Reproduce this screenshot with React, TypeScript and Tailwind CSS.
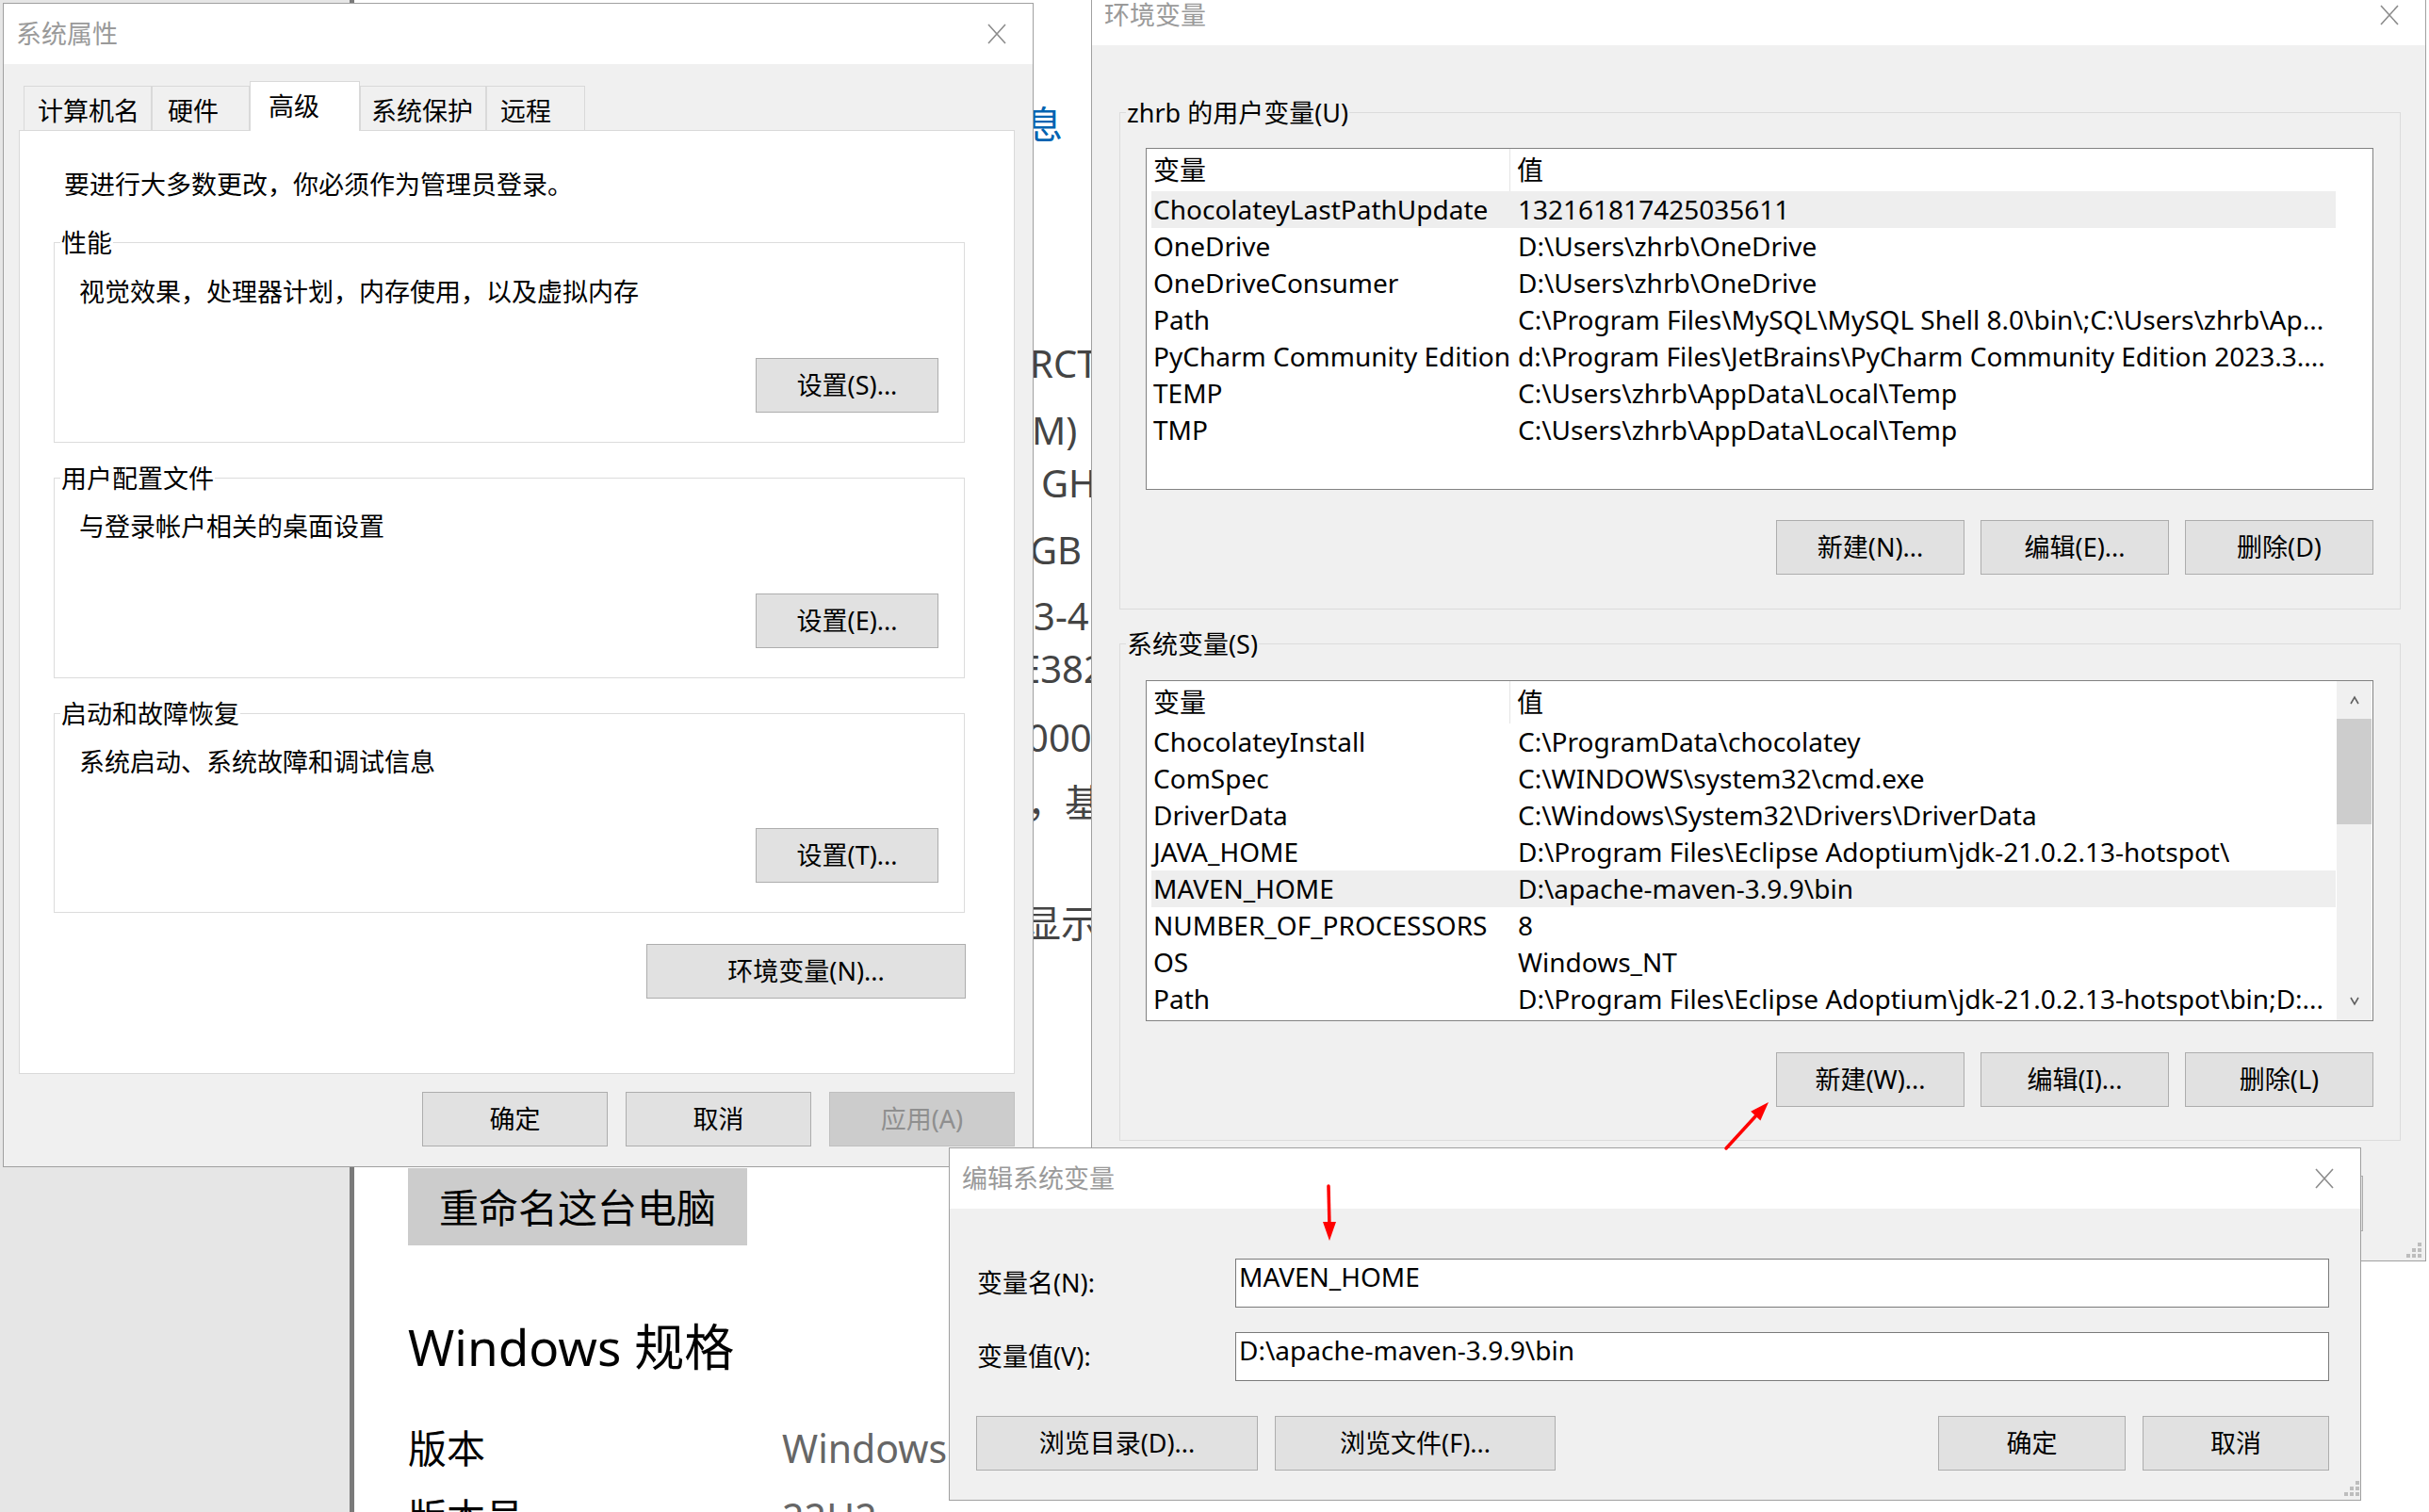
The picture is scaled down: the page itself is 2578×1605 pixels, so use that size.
import type { ReactNode } from 'react';

const FONT = "font-['Noto_Sans','Noto_Sans_CJK_SC',sans-serif]";

function CloseX() {
  return (
    <svg width="22" height="22" viewBox="0 0 22 22" className="shrink-0">
      <path d="M2 1 L20 21 M20 1 L2 21" stroke="#8c8c8c" strokeWidth="1.6" fill="none" />
    </svg>
  );
}

function Grip() {
  return (
    <svg width="16" height="16" viewBox="0 0 16 16">
      <g fill="#bdbdbd">
        <rect x="12" y="0" width="4" height="4" />
        <rect x="6" y="6" width="4" height="4" />
        <rect x="12" y="6" width="4" height="4" />
        <rect x="0" y="12" width="4" height="4" />
        <rect x="6" y="12" width="4" height="4" />
        <rect x="12" y="12" width="4" height="4" />
      </g>
    </svg>
  );
}

function Btn({ children, className = '', disabled = false }: { children: ReactNode; className?: string; disabled?: boolean }) {
  return (
    <div
      className={`flex h-[58px] shrink-0 items-center justify-center border text-[27px] ${
        disabled ? 'border-[#bfbfbf] bg-[#cccccc] text-[#8f8f8f]' : 'border-[#adadad] bg-[#e1e1e1] text-black'
      } ${className}`}
    >
      {children}
    </div>
  );
}

function TitleBar({ title }: { title: string }) {
  return (
    <div className="flex h-[64px] shrink-0 items-center justify-between bg-white pl-[13px] pr-[27px]">
      <span className="text-[27px] text-[#9a9a9a]">{title}</span>
      <CloseX />
    </div>
  );
}

// group box: legend sits on the top border like a Win32 group
function Group({ label, className, children }: { label: string; className: string; children: ReactNode }) {
  return (
    <fieldset className={`border border-[#dcdcdc] ${className}`}>
      <legend className="ml-[6px] px-[1px] text-[27px] leading-[27px]">{label}</legend>
      {children}
    </fieldset>
  );
}

type Row = [string, string];

const userVars: Row[] = [
  ['ChocolateyLastPathUpdate', '132161817425035611'],
  ['OneDrive', 'D:\\Users\\zhrb\\OneDrive'],
  ['OneDriveConsumer', 'D:\\Users\\zhrb\\OneDrive'],
  ['Path', 'C:\\Program Files\\MySQL\\MySQL Shell 8.0\\bin\\;C:\\Users\\zhrb\\Ap...'],
  ['PyCharm Community Edition', 'd:\\Program Files\\JetBrains\\PyCharm Community Edition 2023.3....'],
  ['TEMP', 'C:\\Users\\zhrb\\AppData\\Local\\Temp'],
  ['TMP', 'C:\\Users\\zhrb\\AppData\\Local\\Temp'],
];

const sysVars: Row[] = [
  ['ChocolateyInstall', 'C:\\ProgramData\\chocolatey'],
  ['ComSpec', 'C:\\WINDOWS\\system32\\cmd.exe'],
  ['DriverData', 'C:\\Windows\\System32\\Drivers\\DriverData'],
  ['JAVA_HOME', 'D:\\Program Files\\Eclipse Adoptium\\jdk-21.0.2.13-hotspot\\'],
  ['MAVEN_HOME', 'D:\\apache-maven-3.9.9\\bin'],
  ['NUMBER_OF_PROCESSORS', '8'],
  ['OS', 'Windows_NT'],
  ['Path', 'D:\\Program Files\\Eclipse Adoptium\\jdk-21.0.2.13-hotspot\\bin;D:...'],
];

function VarList({ rows, selected, scroll, className }: { rows: Row[]; selected: number; scroll?: boolean; className: string }) {
  return (
    <div className={`flex border border-[#828282] bg-white text-[28px] ${className}`}>
      <div className="flex w-[1263px] flex-col overflow-hidden">
        <div className="flex h-[45px] shrink-0 items-center">
          <div className="h-full w-[386px] border-r border-[#e5e5e5] pl-[7px] leading-[45px]">变量</div>
          <div className="h-full w-[876px] pl-[7px] leading-[45px]">值</div>
        </div>
        {rows.map(([k, v], i) => (
          <div key={k + i} className={`ml-[5px] flex h-[39px] w-[1257px] shrink-0 items-center leading-[39px] ${i === selected ? 'bg-[#eeeeee]' : ''}`}>
            <span className="w-[387px] shrink-0 whitespace-nowrap pl-[2px]">{k}</span>
            <span className="overflow-hidden whitespace-nowrap pl-[2px]">{v}</span>
          </div>
        ))}
      </div>
      {scroll ? (
        <div className="flex w-[37px] flex-col items-center bg-[#f0f0f0]">
          <svg width="14" height="40" viewBox="0 0 14 40" className="shrink-0">
            <path d="M3 24 L7 17 L11 24" stroke="#606060" strokeWidth="1.6" fill="none" />
          </svg>
          <div className="h-[112px] w-[37px] bg-[#cdcdcd]" />
          <div className="flex-1" />
          <svg width="14" height="40" viewBox="0 0 14 40" className="shrink-0">
            <path d="M3 16 L7 23 L11 16" stroke="#606060" strokeWidth="1.6" fill="none" />
          </svg>
        </div>
      ) : null}
    </div>
  );
}

const tabs = [
  { t: '计算机名', w: 'w-[136px]', p: 'pl-[14px]', sel: false },
  { t: '硬件', w: 'w-[104px]', p: 'pl-[16px]', sel: false },
  { t: '高级', w: 'w-[117px]', p: 'pl-[19px]', sel: true },
  { t: '系统保护', w: 'w-[134px]', p: 'pl-[11px]', sel: false },
  { t: '远程', w: 'w-[105px]', p: 'pl-[14px]', sel: false },
];

// right-hand ends of the About page lines that peek out between the two dialogs
const frags = [
  { t: '信息', c: 'mt-[112px] ml-[615px] text-[#0063b1]' },
  { t: 'RCTL', c: 'mt-[214px] ml-[660px] text-[#444444]' },
  { t: 'M)', c: 'mt-[31px] ml-[662px] text-[#444444]' },
  { t: 'GHz', c: 'mt-[16px] ml-[672px] text-[#444444]' },
  { t: 'GB 可用', c: 'mt-[31px] ml-[660px] text-[#444444]' },
  { t: '3-4', c: 'mt-[30px] ml-[664px] text-[#444444]' },
  { t: 'E382', c: 'mt-[16px] ml-[649px] text-[#444444]' },
  { t: '00000', c: 'mt-[33px] ml-[657px] text-[#444444]' },
  { t: '，基于', c: 'mt-[29px] ml-[657px] text-[#444444]' },
  { t: '显示器', c: 'mt-[88px] ml-[653px] text-[#444444]' },
];

function SettingsPage() {
  return (
    <div className="flex h-full w-full">
      <div className="w-[376px] shrink-0 border-r-[5px] border-[#7a7a7a] bg-[#e6e6e6]" />
      <div className="flex flex-1 flex-col overflow-hidden pl-[57px] text-black">
        {frags.map((f) => (
          <div key={f.t} className={`h-[40px] shrink-0 whitespace-nowrap text-[40px] leading-[40px] ${f.c}`}>
            {f.t}
          </div>
        ))}
        <div className="mt-[240px] flex h-[82px] w-[360px] shrink-0 items-center justify-center bg-[#cccccc] text-[42px]">
          重命名这台电脑
        </div>
        <div className="mt-[78px] h-[60px] shrink-0 text-[53px] leading-[60px]">Windows 规格</div>
        <div className="mt-[52px] flex h-[50px] shrink-0 text-[41px] leading-[50px]">
          <span className="w-[397px]">版本</span>
          <span className="text-[#666666]">Windows 10 家庭中文版</span>
        </div>
        <div className="mt-[23px] flex h-[50px] shrink-0 text-[41px] leading-[50px]">
          <span className="w-[397px]">版本号</span>
          <span className="text-[#666666]">22H2</span>
        </div>
      </div>
    </div>
  );
}

function SystemProperties() {
  return (
    <div className="absolute left-[3px] top-[3px] z-10 flex h-[1236px] w-[1094px] flex-col border border-[#a0a0a0] bg-[#f0f0f0]">
      <TitleBar title="系统属性" />
      {/* tabs */}
      <div className="ml-[21px] mt-[18px] flex h-[52px] items-end">
        {tabs.map((tab) => (
          <div
            key={tab.t}
            className={`relative shrink-0 border border-b-0 border-[#d9d9d9] pt-[8px] text-[27px] leading-[36px] ${tab.w} ${tab.p} ${
              tab.sel ? 'z-10 -mb-px h-[53px] bg-white' : 'h-[47px] bg-[#f0f0f0]'
            }`}
          >
            {tab.t}
          </div>
        ))}
      </div>
      {/* tab page */}
      <div className="ml-[16px] flex h-[1002px] w-[1057px] flex-col border border-[#d9d9d9] bg-white text-[27px]">
        <div className="ml-[47px] mt-[39px] leading-[36px]">要进行大多数更改，你必须作为管理员登录。</div>
        <Group label="性能" className="ml-[36px] mt-[30px] flex h-[226px] w-[967px] flex-col">
          <div className="ml-[26px] mt-[21px] leading-[36px]">视觉效果，处理器计划，内存使用，以及虚拟内存</div>
          <Btn className="mr-[27px] mt-[52px] w-[194px] self-end">设置(S)...</Btn>
        </Group>
        <Group label="用户配置文件" className="ml-[36px] mt-[24px] flex h-[226px] w-[967px] flex-col">
          <div className="ml-[26px] mt-[20px] leading-[36px]">与登录帐户相关的桌面设置</div>
          <Btn className="mr-[27px] mt-[53px] w-[194px] self-end">设置(E)...</Btn>
        </Group>
        <Group label="启动和故障恢复" className="ml-[36px] mt-[24px] flex h-[225px] w-[967px] flex-col">
          <div className="ml-[26px] mt-[20px] leading-[36px]">系统启动、系统故障和调试信息</div>
          <Btn className="mr-[27px] mt-[52px] w-[194px] self-end">设置(T)...</Btn>
        </Group>
        <Btn className="ml-[665px] mt-[33px] w-[339px]">环境变量(N)...</Btn>
      </div>
      <div className="mr-[19px] mt-[19px] flex justify-end gap-[19px]">
        <Btn className="w-[197px]">确定</Btn>
        <Btn className="w-[197px]">取消</Btn>
        <Btn className="w-[197px]" disabled>
          应用(A)
        </Btn>
      </div>
    </div>
  );
}

function EnvVars() {
  return (
    <div className="absolute left-[1158px] top-[-17px] z-10 flex h-[1356px] w-[1417px] flex-col border border-[#a0a0a0] bg-[#f0f0f0] text-[27px]">
      <TitleBar title="环境变量" />
      <Group label="zhrb 的用户变量(U)" className="ml-[29px] mt-[58px] flex h-[541px] w-[1360px] flex-col">
        <VarList rows={userVars} selected={0} className="ml-[27px] mt-[24px] h-[363px] w-[1303px]" />
        <div className="mr-[28px] mt-[32px] flex justify-end gap-[17px]">
          <Btn className="w-[200px]">新建(N)...</Btn>
          <Btn className="w-[200px]">编辑(E)...</Btn>
          <Btn className="w-[200px]">删除(D)</Btn>
        </div>
      </Group>
      <Group label="系统变量(S)" className="ml-[29px] mt-[23px] flex h-[541px] w-[1360px] flex-col">
        <VarList rows={sysVars} selected={4} scroll className="ml-[27px] mt-[25px] h-[362px] w-[1303px]" />
        <div className="mr-[28px] mt-[33px] flex justify-end gap-[17px]">
          <Btn className="w-[200px]">新建(W)...</Btn>
          <Btn className="w-[200px]">编辑(I)...</Btn>
          <Btn className="w-[200px]">删除(L)</Btn>
        </div>
      </Group>
      <div className="mr-[66px] mt-[37px] flex justify-end gap-[19px]">
        <Btn className="h-[59px] w-[200px]">确定</Btn>
        <Btn className="h-[59px] w-[200px]">取消</Btn>
      </div>
      <div className="mt-auto mb-[3px] mr-[4px] self-end">
        <Grip />
      </div>
    </div>
  );
}

function EditVar() {
  return (
    <div className="absolute left-[1007px] top-[1218px] z-20 flex h-[375px] w-[1499px] flex-col border border-[#a0a0a0] bg-[#f0f0f0] text-[27px]">
      <TitleBar title="编辑系统变量" />
      <div className="ml-[29px] mt-[53px] flex items-center">
        <span className="w-[274px] shrink-0">变量名(N):</span>
        <div className="h-[52px] w-[1161px] border border-[#7a7a7a] bg-white pl-[3px] text-[28px] leading-[36px]">MAVEN_HOME</div>
      </div>
      <div className="ml-[29px] mt-[26px] flex items-center">
        <span className="w-[274px] shrink-0">变量值(V):</span>
        <div className="h-[52px] w-[1161px] border border-[#7a7a7a] bg-white pl-[3px] text-[28px] leading-[36px]">D:\apache-maven-3.9.9\bin</div>
      </div>
      <div className="ml-[28px] mr-[33px] mt-[37px] flex gap-[18px]">
        <Btn className="w-[299px]">浏览目录(D)...</Btn>
        <Btn className="w-[298px]">浏览文件(F)...</Btn>
        <div className="flex-1" />
        <Btn className="w-[199px]">确定</Btn>
        <Btn className="w-[198px]">取消</Btn>
      </div>
      <div className="mt-auto mb-[4px] mr-[1px] self-end">
        <Grip />
      </div>
    </div>
  );
}

export default function App() {
  return (
    <div className={`relative h-[1605px] w-[2578px] overflow-hidden bg-white ${FONT}`}>
      <SettingsPage />
      <SystemProperties />
      <EnvVars />
      <EditVar />
      {/* red annotation arrows */}
      <svg className="absolute left-[1400px] top-[1255px] z-30" width="22" height="66" viewBox="0 0 22 66">
        <path d="M10 4 L11 46" stroke="#ff0000" strokeWidth="3.5" strokeLinecap="round" fill="none" />
        <polygon points="4,42 18,42 11,62" fill="#ff0000" />
      </svg>
      <svg className="absolute left-[1820px] top-[1160px] z-30" width="70" height="70" viewBox="0 0 70 70">
        <path d="M12 59 L45 23" stroke="#ff0000" strokeWidth="3.5" strokeLinecap="round" fill="none" />
        <polygon points="57,10 48.4,29.4 38.2,19.8" fill="#ff0000" />
      </svg>
    </div>
  );
}
